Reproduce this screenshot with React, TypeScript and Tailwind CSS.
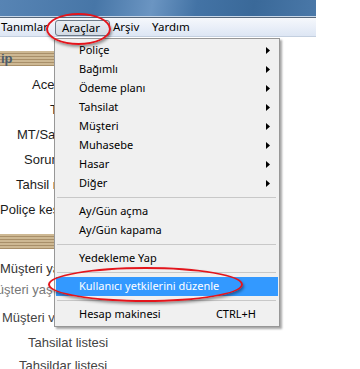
import React from "react"

type Item = { label?: string; sub?: boolean; sep?: boolean; active?: boolean; shortcut?: string }

const ITEMS: Item[] = [
  { label: "Poliçe", sub: true },
  { label: "Bağımlı", sub: true },
  { label: "Ödeme planı", sub: true },
  { label: "Tahsilat", sub: true },
  { label: "Müşteri", sub: true },
  { label: "Muhasebe", sub: true },
  { label: "Hasar", sub: true },
  { label: "Diğer", sub: true },
  { sep: true },
  { label: "Ay/Gün açma" },
  { label: "Ay/Gün kapama" },
  { sep: true },
  { label: "Yedekleme Yap" },
  { sep: true },
  { label: "Kullanıcı yetkilerini düzenle", active: true },
  { sep: true },
  { label: "Hesap makinesi", shortcut: "CTRL+H" },
]

const Arrow = () => (
  <svg width="4" height="7" viewBox="0 0 4 7" className="shrink-0">
    <path d="M0 0 L4 3.5 L0 7 Z" fill="#000" />
  </svg>
)

const Band = ({ children }: { children?: React.ReactNode }) => (
  <div className="h-[15px] w-full flex items-center bg-[repeating-linear-gradient(180deg,#cdb893_0px,#cdb893_2px,#a88f69_2px,#a88f69_3px)] text-[13px] font-bold leading-none text-[#4c5c6c] font-['Liberation_Sans',sans-serif]">
    {children}
  </div>
)

export default function App() {
  return (
    <div className="relative w-[360px] h-[369px] overflow-hidden bg-white font-['Noto_Sans',sans-serif]">
      {/* window chrome */}
      <div className="w-[316px]">
        <div className="h-[16px] bg-[linear-gradient(100deg,#5784b4_0%,#4776a7_30%,#6b95c2_48%,#4373a5_62%,#3a6999_80%,#4a78a8_100%)]" />
        <div className="h-px bg-[#c8d7e8]" />
        <div className="h-px bg-[#56677a]" />
        <div className="h-[19px] flex text-[11.5px] text-black bg-[linear-gradient(180deg,#f6f8fc,#dde6f4)] border-b border-[#c3cfdf]">
          <div className="w-[55px] pl-px flex items-center">Tanımlar</div>
          <div className="w-[55px] h-[16px] mt-[2px] pl-[6px] flex items-center rounded-[3px] border border-[#6f7b89] bg-[linear-gradient(180deg,#e9edf2,#d2dae4)]">
            Araçlar
          </div>
          <div className="ml-[3px] w-[39px] flex items-center">Arşiv</div>
          <div className="flex items-center">Yardım</div>
        </div>
      </div>

      {/* form behind the menu */}
      <div className="font-['Liberation_Sans',sans-serif] text-[13px] text-[#1c1c1c] whitespace-nowrap">
        <div className="mt-[14px] w-[120px]">
          <Band>
            <span className="pl-px">ip</span>
          </Band>
        </div>
        <div className="mt-[6px]">
          <div className="h-[25px] flex items-center pl-[32px]">Acente</div>
          <div className="h-[25px] flex items-center pl-[50px]">Tarih</div>
          <div className="h-[25px] flex items-center pl-[17px]">MT/Satıcı</div>
          <div className="h-[25px] flex items-center pl-[24px]">Sorumlu</div>
          <div className="h-[25px] flex items-center pl-[16px]">Tahsil no</div>
          <div className="h-[25px] flex items-center pl-0">Poliçe kesme</div>
        </div>
        <div className="mt-[12px] w-[120px]">
          <Band />
        </div>
        <div className="mt-[10px] text-[#333]">
          <div className="h-[20px] flex items-center">Müşteri yaş listesi</div>
          <div className="h-[21px] flex items-center -ml-[14px] text-[#777]">Müşteri yaş grubu</div>
          <div className="mt-[5px] h-[26px] flex items-center pl-[2px] text-[#444]">Müşteri vade</div>
          <div className="h-[24px] flex items-center pl-[28px] text-[#444]">Tahsilat listesi</div>
          <div className="h-[22px] flex items-center pl-[19px] text-[#444]">Tahsildar listesi</div>
        </div>
      </div>

      {/* dropdown menu */}
      <div className="absolute left-[54px] top-[38px] w-[226px] border border-[#979797] bg-[#f0f0f0] px-px py-[2px] shadow-[2px_2px_2px_rgba(0,0,0,0.35)] text-[11px] text-black">
        {ITEMS.map((it, i) =>
          it.sep ? (
            <div key={i} className="h-[9px] flex items-center pl-px pr-[2px]">
              <div className="h-px w-full bg-[#c8c8c8]" />
            </div>
          ) : (
            <div
              key={i}
              className={
                it.active
                  ? "h-[19px] flex items-center pl-[23px] pr-[8px] bg-[#3399ff] text-white"
                  : "h-[19px] flex items-center pl-[23px] pr-[8px]"
              }
            >
              <span className="flex-1 whitespace-nowrap">{it.label}</span>
              {it.sub && <Arrow />}
              {it.shortcut && <span className="mr-[14px]">{it.shortcut}</span>}
            </div>
          )
        )}
      </div>

      {/* red highlight rings */}
      <div className="absolute left-[46px] top-[13px] w-[65px] h-[32px] rounded-[50%] border-[2px] border-[#e3151c] shadow-[1px_2px_3px_rgba(0,0,0,0.4)]" />
      <div className="absolute left-[48px] top-[267px] w-[195px] h-[35px] rounded-[50%] border-[2px] border-[#e3151c] shadow-[1px_2px_3px_rgba(0,0,0,0.4)]" />
    </div>
  )
}
